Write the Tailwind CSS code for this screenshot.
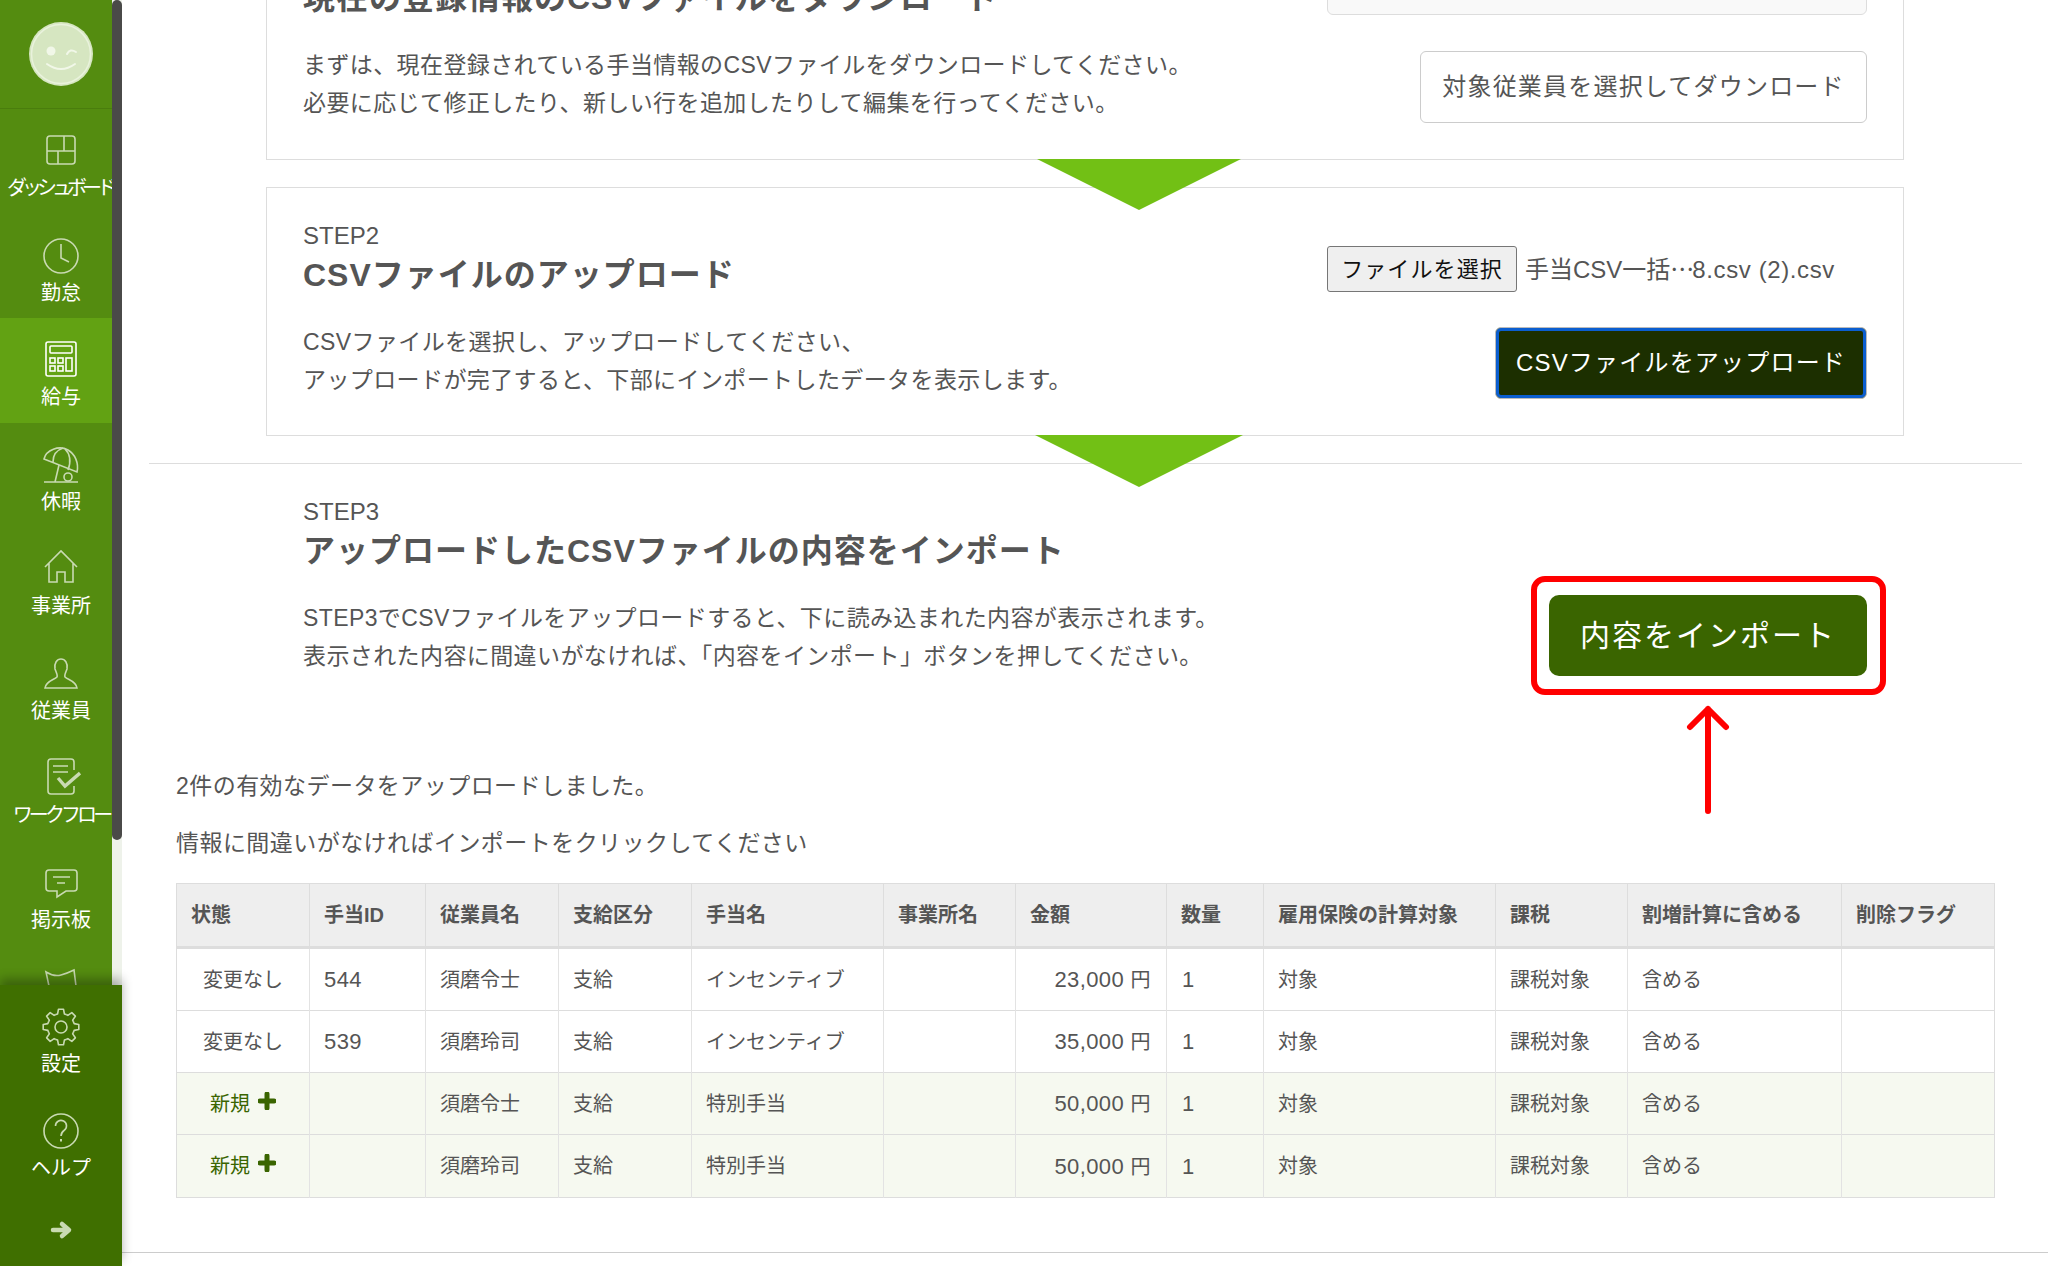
<!DOCTYPE html>
<html lang="ja">
<head>
    <meta charset="UTF-8">
    <meta name="viewport" content="width=device-width, initial-scale=1.0">
    <title>手当CSV一括インポート</title>
    <script src="https://cdn.jsdelivr.net/npm/@tailwindcss/browser@4"></script>
</head>
<body class="bg-white text-[#555] font-['Liberation_Sans','Noto_Sans_CJK_JP',sans-serif] antialiased">
<div class="flex w-[2048px] h-[1266px] overflow-hidden">

    <!-- Sidebar -->
    <aside class="w-[122px] h-full shrink-0 flex flex-col text-white text-[20px] leading-[24px]">
        <div class="relative h-[985px] overflow-hidden">
            <nav class="w-[122px] bg-[#548c10]">
                <div class="h-[109px] border-b border-[#4a7d0d] flex items-start justify-center pt-[21px]">
                    <svg width="66" height="66" viewBox="28 21 66 66" fill="none">
                        <circle cx="61" cy="54" r="32" fill="#d6e6c1"/>
                        <circle cx="61" cy="54" r="29.5" stroke="#e9f2dc" stroke-width="1.5"/>
                        <circle cx="51" cy="51" r="4.5" fill="#f1f7e8"/>
                        <path d="M67 54 Q70 48 76 52" stroke="#f1f7e8" stroke-width="2" stroke-linecap="round"/>
                        <path d="M47 64 Q61 74 75 64" stroke="#f1f7e8" stroke-width="2" stroke-linecap="round"/>
                    </svg>
                </div>

                <a class="h-[104.5px] flex flex-col items-center pt-[20px]">
                    <svg width="40" height="40" viewBox="41 129 40 40" fill="none" stroke="#c9dab2" stroke-width="1.6">
                        <rect x="47" y="136" width="28" height="28" rx="3"/>
                        <path d="M47 151 H75 M64 136 V151 M58 151 V164"/>
                    </svg>
                    <span class="mt-[7px] -ml-[3px] tracking-[-5px] whitespace-nowrap">ダッシュボード</span>
                </a>
                <a class="h-[104.5px] flex flex-col items-center pt-[20px]">
                    <svg width="40" height="40" viewBox="41 233 40 40" fill="none" stroke="#c9dab2" stroke-width="1.6">
                        <circle cx="61" cy="255" r="17"/>
                        <path d="M61 243 V257 L69 261"/>
                    </svg>
                    <span class="mt-[7px]">勤怠</span>
                </a>
                <a class="h-[104.5px] flex flex-col items-center pt-[20px] bg-[#62a213]">
                    <svg width="40" height="40" viewBox="41 338 40 40" fill="none" stroke="#ffffff" stroke-width="1.6">
                        <rect x="46" y="342" width="30" height="34" rx="2"/>
                        <rect x="50" y="346" width="22" height="7" rx="1"/>
                        <rect x="50" y="358" width="5" height="5"/>
                        <rect x="58" y="358" width="5" height="5"/>
                        <rect x="50" y="366" width="5" height="5"/>
                        <rect x="58" y="366" width="5" height="5"/>
                        <rect x="66" y="358" width="6" height="13"/>
                    </svg>
                    <span class="mt-[7px]">給与</span>
                </a>
                <a class="h-[104.5px] flex flex-col items-center pt-[20px]">
                    <svg width="40" height="40" viewBox="41 442 40 40" fill="none" stroke="#c9dab2" stroke-width="1.6">
                        <path d="M44 458 C46 449 59 444 68 449 C75 453 79 462 77 471 Z"/>
                        <path d="M53 461 C53 454 57 449 63 447 M68 469 C71 461 70 453 65 448"/>
                        <path d="M59 464 L55 481 M44 481 H78"/>
                        <circle cx="68" cy="476" r="4"/>
                    </svg>
                    <span class="mt-[7px]">休暇</span>
                </a>
                <a class="h-[104.5px] flex flex-col items-center pt-[20px]">
                    <svg width="40" height="40" viewBox="41 547 40 40" fill="none" stroke="#c9dab2" stroke-width="1.6">
                        <path d="M45 567 L61 551 L77 567 M49 563 V582 H57 V572 H65 V582 H73 V563"/>
                    </svg>
                    <span class="mt-[7px]">事業所</span>
                </a>
                <a class="h-[104.5px] flex flex-col items-center pt-[20px]">
                    <svg width="40" height="40" viewBox="41 651 40 40" fill="none" stroke="#c9dab2" stroke-width="1.6">
                        <path d="M45 687 C46 680 54 679 57 676 C58 674 56 671 55 668 C54 662 57 658 61 658 C65 658 68 662 67 668 C66 671 64 674 65 676 C68 679 76 680 77 687 Z"/>
                    </svg>
                    <span class="mt-[7px]">従業員</span>
                </a>
                <a class="h-[104.5px] flex flex-col items-center pt-[20px]">
                    <svg width="40" height="40" viewBox="41 756 40 40" fill="none" stroke="#c9dab2" stroke-width="1.6">
                        <path d="M74 770 V762 Q74 759 71 759 H51 Q48 759 48 762 V791 Q48 794 51 794 H71 Q74 794 74 791 V786"/>
                        <path d="M53 766 H68 M53 772 H68"/>
                        <path d="M58 778 L65 786 L80 773" stroke-width="3.4"/>
                    </svg>
                    <span class="mt-[7px] tracking-[-3.9px] whitespace-nowrap">ワークフロー</span>
                </a>
                <a class="h-[104.5px] flex flex-col items-center pt-[20px]">
                    <svg width="40" height="40" viewBox="41 860 40 40" fill="none" stroke="#c9dab2" stroke-width="1.6">
                        <path d="M49 869 H74 Q77 869 77 872 V887 Q77 890 74 890 H66 L57 896 V890 H49 Q46 890 46 887 V872 Q46 869 49 869 Z"/>
                        <path d="M53 876 H70 M57 882 H65"/>
                    </svg>
                    <span class="mt-[7px]">掲示板</span>
                </a>
                <a class="h-[104.5px] flex flex-col items-center pt-[20px]">
                    <svg width="40" height="40" viewBox="41 965 40 40" fill="none" stroke="#c9dab2" stroke-width="1.6">
                        <path d="M49 986 L46 972 Q54 977 61 975 T74 970 L76 986"/>
                    </svg>
                </a>
            </nav>
            <!-- scrollbar sits over the nav -->
            <div class="absolute right-0 top-0 bottom-0 w-[10px] bg-[#eef2ea]">
                <div class="h-[840px] bg-[#4a4a48] rounded-[5px]"></div>
            </div>
        </div>

        <div class="relative z-10 flex-1 bg-[#3f6f00] shadow-[0_-6px_10px_rgba(0,0,0,0.3)] flex flex-col items-center pt-[22px]">
            <svg width="40" height="40" viewBox="41 1008 40 40" fill="none" stroke="#c9dab2" stroke-width="1.6" stroke-linejoin="round">
                <defs>
                    <path id="gear-seg" d="M-5.17 -12.47 L-3.4 -13.1 L-2.5 -17.8 H2.5 L3.4 -13.1 L5.17 -12.47"/>
                </defs>
                <g transform="translate(61 1028)">
                    <use href="#gear-seg"/>
                    <use href="#gear-seg" transform="rotate(45)"/>
                    <use href="#gear-seg" transform="rotate(90)"/>
                    <use href="#gear-seg" transform="rotate(135)"/>
                    <use href="#gear-seg" transform="rotate(180)"/>
                    <use href="#gear-seg" transform="rotate(225)"/>
                    <use href="#gear-seg" transform="rotate(270)"/>
                    <use href="#gear-seg" transform="rotate(315)"/>
                    <circle r="6"/>
                </g>
            </svg>
            <span class="mt-[5px]">設定</span>
            <svg class="mt-[35px]" width="40" height="40" viewBox="41 1111 40 40" fill="none" stroke="#c9dab2" stroke-width="1.6">
                <circle cx="61" cy="1131" r="17"/>
                <path d="M55.500 1126 A5.500 5.500 0 1 1 64 1130.500 C62 1132 61 1133 61 1136"/>
                <path d="M61 1139 V1141.500" stroke-width="2"/>
            </svg>
            <span class="mt-[5px]">ヘルプ</span>
            <svg class="mt-[38px]" width="24" height="24" viewBox="49 1218 24 24" fill="none" stroke="#c9dab2" stroke-width="4.500" stroke-linejoin="round" stroke-linecap="round">
                <path d="M53 1230 H68 M62 1224 L69 1230 L62 1236"/>
            </svg>
        </div>
    </aside>

    <!-- Main -->
    <main class="flex-1 min-w-0 h-full overflow-hidden">
        <div class="ml-[144px] w-[1638px] -mt-[88px]">
            <section class="relative h-[248px] border border-[#ddd] pl-[36px] pr-[36px] flex justify-between">
                <div>
                    <p class="pt-[33px] text-[24px] leading-[26px]">STEP1</p>
                    <h2 class="mt-[6px] text-[32px] leading-[40px] font-bold tracking-[1px]">現在の登録情報のCSVファイルをダウンロード</h2>
                    <p class="mt-[28px] text-[23px] leading-[38px] tracking-[0.4px]">まずは、現在登録されている手当情報のCSVファイルをダウンロードしてください。<br>必要に応じて修正したり、新しい行を追加したりして編集を行ってください。</p>
                </div>
                <div class="w-[540px] flex flex-col items-end pt-[57px]">
                    <div class="w-full h-[45px] bg-[#f9f9f9] border border-[#ddd] rounded-[6px]"></div>
                    <button class="mt-[36px] w-[447px] h-[72px] bg-white border border-[#ccc] rounded-[6px] text-[24px] tracking-[0.05em]">対象従業員を選択してダウンロード</button>
                </div>
                <div class="absolute z-10 top-full left-[770px] w-0 h-0 border-x-[102px] border-x-transparent border-t-[51px] border-t-[#72c015]"></div>
            </section>

            <section class="relative mt-[27px] h-[249px] border border-[#ddd] pl-[36px] pr-[36px] flex justify-between">
                <div>
                    <p class="pt-[35px] text-[24px] leading-[26px]">STEP2</p>
                    <h2 class="mt-[6px] text-[32px] leading-[40px] font-bold tracking-[1px]">CSVファイルのアップロード</h2>
                    <p class="mt-[28px] text-[23px] leading-[38px] tracking-[0.4px]">CSVファイルを選択し、アップロードしてください、<br>アップロードが完了すると、下部にインポートしたデータを表示します。</p>
                </div>
                <div class="w-[540px] flex flex-col items-end pt-[58px]">
                    <div class="w-full h-[47px] flex items-start">
                        <button class="w-[190px] h-[46px] bg-[#efefef] border border-[#767676] rounded-[3px] text-[#111] text-[22px] tracking-[0.05em]">ファイルを選択</button>
                        <span class="ml-[8px] mt-[4px] text-[24px] whitespace-nowrap">手当CSV一括<span class="font-['Noto_Sans_CJK_JP',sans-serif] tracking-[-2px]">…</span><span class="tracking-[0.6px]">8.csv (2).csv</span></span>
                    </div>
                    <button class="mt-[34px] w-[372px] h-[72px] bg-[#1c2f00] text-white border border-[#bbb] shadow-[inset_0_0_0_3px_#0b5ed0] rounded-[6px] text-[24px] tracking-[0.05em]">CSVファイルをアップロード</button>
                </div>
                <div class="absolute z-10 top-full left-[768px] w-0 h-0 border-x-[104px] border-x-transparent border-t-[52px] border-t-[#72c015]"></div>
            </section>
        </div>

        <section class="ml-[27px] mt-[27px] w-[1873px] border-t border-[#ddd] h-[304px] pl-[154px] pr-[155px] flex justify-between">
            <div>
                <p class="pt-[35px] text-[24px] leading-[26px]">STEP3</p>
                <h2 class="mt-[6px] text-[32px] leading-[40px] font-bold tracking-[1px]">アップロードしたCSVファイルの内容をインポート</h2>
                <p class="mt-[28px] text-[23px] leading-[38px] tracking-[0.4px]">STEP3でCSVファイルをアップロードすると、下に読み込まれた内容が表示されます。<br>表示された内容に間違いがなければ、「内容をインポート」ボタンを押してください。</p>
            </div>
            <div class="relative mt-[131px] w-[318px] h-[81px]">
                <button class="w-full h-full bg-[#3a6500] text-white rounded-[10px] text-[30px] tracking-[2px]">内容をインポート</button>
                <!-- red annotation over the button -->
                <div class="absolute -left-[18px] -top-[19px] w-[355px] h-[119px] border-[6px] border-[#ff0000] rounded-[14px]"></div>
                <svg class="absolute left-[135px] top-[108px]" width="48" height="112" viewBox="0 0 48 112" fill="none" stroke="#ff0000" stroke-width="6" stroke-linecap="round" stroke-linejoin="round">
                    <path d="M24 6 V108 M6 24 L24 6 L42 24"/>
                </svg>
            </div>
        </section>

        <div class="ml-[54px] text-[23px] leading-[38px] tracking-[0.45px]">
            <p>2件の有効なデータをアップロードしました。</p>
            <p class="mt-[19px]">情報に間違いがなければインポートをクリックしてください</p>
        </div>

        <table class="ml-[54px] mt-[21px] w-[1818px] table-fixed border-collapse border border-[#ddd] text-[20px] text-left">
            <colgroup>
                <col class="w-[133px]"><col class="w-[116px]"><col class="w-[133px]"><col class="w-[133px]"><col class="w-[192px]"><col class="w-[132px]"><col class="w-[151px]"><col class="w-[97px]"><col class="w-[232px]"><col class="w-[132px]"><col class="w-[214px]"><col class="w-[153px]">
            </colgroup>
            <thead>
                <tr class="h-[64px] bg-[#eee] border-b-[3px] border-[#ddd]">
                    <th class="px-[14px] font-bold border-r border-[#ddd]">状態</th>
                    <th class="px-[14px] font-bold border-r border-[#ddd]">手当ID</th>
                    <th class="px-[14px] font-bold border-r border-[#ddd]">従業員名</th>
                    <th class="px-[14px] font-bold border-r border-[#ddd]">支給区分</th>
                    <th class="px-[14px] font-bold border-r border-[#ddd]">手当名</th>
                    <th class="px-[14px] font-bold border-r border-[#ddd]">事業所名</th>
                    <th class="px-[14px] font-bold border-r border-[#ddd]">金額</th>
                    <th class="px-[14px] font-bold border-r border-[#ddd]">数量</th>
                    <th class="px-[14px] font-bold border-r border-[#ddd] whitespace-nowrap">雇用保険の計算対象</th>
                    <th class="px-[14px] font-bold border-r border-[#ddd]">課税</th>
                    <th class="px-[14px] font-bold border-r border-[#ddd] whitespace-nowrap">割増計算に含める</th>
                    <th class="px-[14px] font-bold">削除フラグ</th>
                </tr>
            </thead>
            <tbody>
                <tr class="h-[63px] border-b border-[#ddd]">
                    <td class="px-[14px] border-r border-[#e3e3e3] text-center">変更なし</td>
                    <td class="px-[14px] border-r border-[#e3e3e3] text-[22px] tracking-[0.4px]">544</td>
                    <td class="px-[14px] border-r border-[#e3e3e3]">須磨令士</td>
                    <td class="px-[14px] border-r border-[#e3e3e3]">支給</td>
                    <td class="px-[14px] border-r border-[#e3e3e3]">インセンティブ</td>
                    <td class="px-[14px] border-r border-[#e3e3e3]"></td>
                    <td class="pr-[15px] border-r border-[#e3e3e3] text-right text-[22px] tracking-[0.4px]">23,000 <span class="text-[20px]">円</span></td>
                    <td class="pl-[15px] border-r border-[#e3e3e3] text-[22px]">1</td>
                    <td class="px-[14px] border-r border-[#e3e3e3]">対象</td>
                    <td class="px-[14px] border-r border-[#e3e3e3]">課税対象</td>
                    <td class="px-[14px] border-r border-[#e3e3e3]">含める</td>
                    <td class="px-[14px]"></td>
                </tr>
                <tr class="h-[62px] border-b border-[#ddd]">
                    <td class="px-[14px] border-r border-[#e3e3e3] text-center">変更なし</td>
                    <td class="px-[14px] border-r border-[#e3e3e3] text-[22px] tracking-[0.4px]">539</td>
                    <td class="px-[14px] border-r border-[#e3e3e3]">須磨玲司</td>
                    <td class="px-[14px] border-r border-[#e3e3e3]">支給</td>
                    <td class="px-[14px] border-r border-[#e3e3e3]">インセンティブ</td>
                    <td class="px-[14px] border-r border-[#e3e3e3]"></td>
                    <td class="pr-[15px] border-r border-[#e3e3e3] text-right text-[22px] tracking-[0.4px]">35,000 <span class="text-[20px]">円</span></td>
                    <td class="pl-[15px] border-r border-[#e3e3e3] text-[22px]">1</td>
                    <td class="px-[14px] border-r border-[#e3e3e3]">対象</td>
                    <td class="px-[14px] border-r border-[#e3e3e3]">課税対象</td>
                    <td class="px-[14px] border-r border-[#e3e3e3]">含める</td>
                    <td class="px-[14px]"></td>
                </tr>
                <tr class="h-[62px] border-b border-[#ddd] bg-[#f6f9f0]">
                    <td class="px-[14px] border-r border-[#e3e3e3] text-center text-[#3a6500]">新規<svg class="inline-block ml-[8px] align-[1px]" width="18" height="18" viewBox="0 0 18 18"><path d="M9 2 V16 M2 9 H16" stroke="#3a6500" stroke-width="5" stroke-linecap="round"/></svg></td>
                    <td class="px-[14px] border-r border-[#e3e3e3]"></td>
                    <td class="px-[14px] border-r border-[#e3e3e3]">須磨令士</td>
                    <td class="px-[14px] border-r border-[#e3e3e3]">支給</td>
                    <td class="px-[14px] border-r border-[#e3e3e3]">特別手当</td>
                    <td class="px-[14px] border-r border-[#e3e3e3]"></td>
                    <td class="pr-[15px] border-r border-[#e3e3e3] text-right text-[22px] tracking-[0.4px]">50,000 <span class="text-[20px]">円</span></td>
                    <td class="pl-[15px] border-r border-[#e3e3e3] text-[22px]">1</td>
                    <td class="px-[14px] border-r border-[#e3e3e3]">対象</td>
                    <td class="px-[14px] border-r border-[#e3e3e3]">課税対象</td>
                    <td class="px-[14px] border-r border-[#e3e3e3]">含める</td>
                    <td class="px-[14px]"></td>
                </tr>
                <tr class="h-[63px] bg-[#f6f9f0]">
                    <td class="px-[14px] border-r border-[#e3e3e3] text-center text-[#3a6500]">新規<svg class="inline-block ml-[8px] align-[1px]" width="18" height="18" viewBox="0 0 18 18"><path d="M9 2 V16 M2 9 H16" stroke="#3a6500" stroke-width="5" stroke-linecap="round"/></svg></td>
                    <td class="px-[14px] border-r border-[#e3e3e3]"></td>
                    <td class="px-[14px] border-r border-[#e3e3e3]">須磨玲司</td>
                    <td class="px-[14px] border-r border-[#e3e3e3]">支給</td>
                    <td class="px-[14px] border-r border-[#e3e3e3]">特別手当</td>
                    <td class="px-[14px] border-r border-[#e3e3e3]"></td>
                    <td class="pr-[15px] border-r border-[#e3e3e3] text-right text-[22px] tracking-[0.4px]">50,000 <span class="text-[20px]">円</span></td>
                    <td class="pl-[15px] border-r border-[#e3e3e3] text-[22px]">1</td>
                    <td class="px-[14px] border-r border-[#e3e3e3]">対象</td>
                    <td class="px-[14px] border-r border-[#e3e3e3]">課税対象</td>
                    <td class="px-[14px] border-r border-[#e3e3e3]">含める</td>
                    <td class="px-[14px]"></td>
                </tr>
            </tbody>
        </table>

        <div class="mt-[54px] w-full border-t border-[#ccc]"></div>
    </main>
</div>
</body>
</html>
